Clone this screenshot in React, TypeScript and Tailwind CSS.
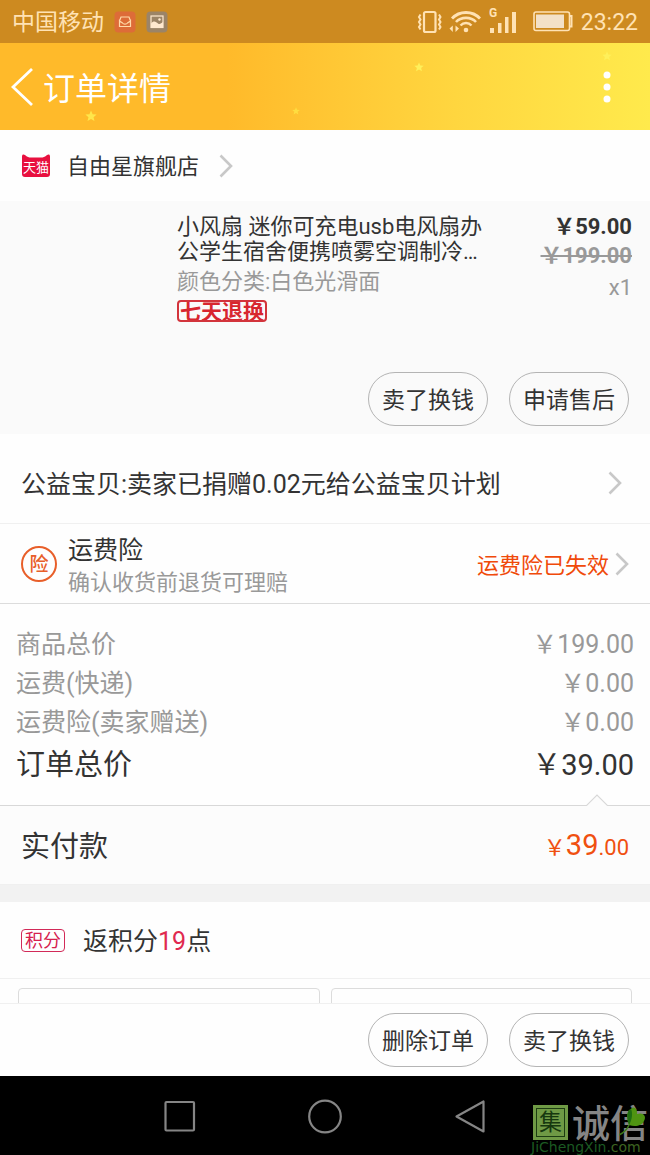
import React from "react";

const Chevron: React.FC<{ className?: string }> = ({ className = "" }) => (
  <svg
    className={`h-6 w-3.5 shrink-0 text-[#c8c8c8] ${className}`}
    viewBox="0 0 14 24"
    fill="none"
    stroke="currentColor"
    strokeWidth="2.6"
    aria-hidden="true"
  >
    <path d="M1.5 1.5 L12 12 L1.5 22.5" />
  </svg>
);

const Star: React.FC<{ className: string }> = ({ className }) => (
  <svg className={`absolute ${className}`} viewBox="0 0 24 24" fill="currentColor" aria-hidden="true">
    <path d="M12 1l3.2 7.4 8 .7-6.1 5.3 1.9 7.8-7-4.2-7 4.2 1.9-7.8L.8 9.1l8-.7z" />
  </svg>
);

const PillButton: React.FC<{ children: React.ReactNode }> = ({ children }) => (
  <button
    type="button"
    className="h-[54px] w-[120px] rounded-full border border-[#b4b4b4] pt-1 text-[23px] leading-8 text-[#333]"
  >
    {children}
  </button>
);

const StatusBar: React.FC = () => (
  <div className="flex h-[43px] shrink-0 items-center bg-[#cd8a20] px-3 text-[23px] leading-8 text-[#ffe2b4]">
    <span className="pt-0.5">中国移动</span>
    <svg className="ml-2.5 h-[22px] w-[22px]" viewBox="0 0 22 22" fill="none" aria-hidden="true">
      <rect x="0.5" y="0.5" width="21" height="21" rx="4" fill="#dd6c38" />
      <path
        d="M5.5 10 L7 6 H15 L16.5 10 M5.5 8.5 V15.5 H16.5 V8.5 M5.5 10 L8.5 12 C9.5 13.5 12.5 13.5 13.5 12 L16.5 10"
        stroke="#ffd9a8"
        strokeWidth="1.2"
      />
    </svg>
    <svg className="ml-2.5 h-[22px] w-[22px]" viewBox="0 0 22 22" fill="none" aria-hidden="true">
      <rect x="0.5" y="0.5" width="21" height="21" rx="4" fill="#9b8467" />
      <rect x="5" y="5" width="12" height="11.5" stroke="#ffe9cf" strokeWidth="1.2" />
      <path d="M5 12.5 C8 9 10 11 12 12.5 C14 14 15 12 17 11 V16.5 H5z" fill="#ffe9cf" />
      <circle cx="13.5" cy="8.5" r="1.2" fill="#ffe9cf" />
    </svg>

    <div className="ml-auto flex items-center">
      {/* vibrate */}
      <svg className="h-6 w-[26px]" viewBox="0 0 26 24" fill="none" stroke="currentColor" aria-hidden="true">
        <rect x="7" y="2" width="11.5" height="20" rx="1.5" strokeWidth="2.2" />
        <path
          d="M3.5 4.500 L2 7 L3.500 9.500 L2 12 L3.500 14.500 L2 17 L3.500 19.500 M22 4.500 L23.500 7 L22 9.500 L23.500 12 L22 14.500 L23.500 17 L22 19.500"
          strokeWidth="2"
        />
      </svg>
      {/* wifi */}
      <svg className="ml-1.5 h-6 w-8" viewBox="0 0 32 24" fill="none" stroke="currentColor" aria-hidden="true">
        <path d="M3 8.5 C10.5 0.5 23.5 0.5 31 8.5" strokeWidth="2.8" />
        <path d="M7 12 C12 6.5 22 6.5 27 12" strokeWidth="2.6" />
        <path d="M11.5 15.5 C14.5 12.2 19.5 12.2 22.5 15.5" strokeWidth="2.4" />
        <circle cx="17" cy="20" r="2.3" fill="currentColor" stroke="none" />
        <path d="M3.8 15.5 V22 L0.5 18.5z M6.500 22 V15.5 L10 18.5z" fill="currentColor" stroke="none" />
      </svg>
      {/* mobile signal */}
      <svg className="ml-2 h-8 w-7" viewBox="0 0 28 32" fill="currentColor" aria-hidden="true">
        <text x="0" y="11" fontSize="12" fontWeight="700" fontFamily="Roboto, sans-serif">
          G
        </text>
        <rect x="1" y="22" width="4" height="5" />
        <rect x="9" y="17" width="3.5" height="10" />
        <rect x="16" y="11" width="3.5" height="16" />
        <rect x="23" y="6" width="4" height="21" />
      </svg>
      {/* battery */}
      <svg className="ml-4 h-[21px] w-10" viewBox="0 0 40 21" fill="none" aria-hidden="true">
        <rect x="1" y="1" width="35.5" height="18.5" rx="2" stroke="currentColor" strokeWidth="1.6" />
        <rect x="3" y="3.5" width="28" height="13.5" fill="#f3e1c8" />
        <path d="M37 5 H38.5 V15.500 H37" stroke="currentColor" strokeWidth="2" />
      </svg>
      <time className="ml-2 pt-0.5">23:22</time>
    </div>
  </div>
);

const Header: React.FC = () => (
  <header className="relative flex h-[87px] shrink-0 items-center bg-linear-to-r from-[#ffba2a] from-35% via-[#ffd63f] via-70% to-[#ffea4c] text-white">
    <Star className="left-[85px] top-[67px] h-3 w-3 text-[#ffe64a]" />
    <Star className="left-[292px] top-16 h-2 w-2 text-[#ffdd40]" />
    <Star className="left-[414px] top-[19px] h-2.5 w-2.5 text-[#fff05a]" />
    <Star className="left-[602px] top-2 h-2.5 w-2.5 text-[#fff05a]" />
    <button type="button" aria-label="返回" className="pl-[11px]">
      <svg className="h-10 w-[23px]" viewBox="0 0 23 40" fill="none" stroke="currentColor" strokeWidth="2.8">
        <path d="M21 2 L2 20 L21 38" />
      </svg>
    </button>
    <h1 className="ml-[9px] pt-1 text-[32px] leading-10">订单详情</h1>
    <button type="button" aria-label="更多" className="ml-auto mr-[39px]">
      <svg className="h-8 w-2" viewBox="0 0 8 32" fill="currentColor">
        <circle cx="4" cy="4" r="3.5" />
        <circle cx="4" cy="16" r="3.5" />
        <circle cx="4" cy="28" r="3.5" />
      </svg>
    </button>
  </header>
);

const fees = [
  { label: "商品总价", value: "￥199.00" },
  { label: "运费(快递)", value: "￥0.00" },
  { label: "运费险(卖家赠送)", value: "￥0.00" },
];

const App: React.FC = () => {
  return (
    <div className="flex h-screen flex-col overflow-hidden bg-[#fefefe] font-['Roboto','Noto_Sans_CJK_SC',sans-serif] text-[#333]">
      <StatusBar />
      <Header />

      <main className="min-h-0 flex-1 overflow-y-auto [scrollbar-width:none]">
        <a href="#shop" className="flex h-[71px] items-center px-[21px] text-[22px] leading-8">
          <svg className="mr-4 h-6 w-[30px]" viewBox="0 0 30 24" aria-hidden="true">
            <path
              d="M1 2.5 C1 0.3 2.500 0 4 1 C6 3 8 3.600 10 3.600 H20 C22 3.600 24 3 26 1 C27.500 0 29 0.300 29 2.500 V20 C29 22 28 23 26 23 H4 C2 23 1 22 1 20z"
              fill="#e8103f"
            />
            <text x="15" y="18" fontSize="13" textAnchor="middle" fill="#fff">
              天猫
            </text>
          </svg>
          <span className="pt-0.5">自由星旗舰店</span>
          <Chevron className="ml-5" />
        </a>

        <section className="bg-[#fafafa] pb-2 pt-[13px]">
          <div className="flex pl-[21px] pr-[18px]">
            <div className="mr-3 h-36 w-36 shrink-0" />
            <div className="min-w-0 flex-1">
              <h2 className="text-[22px] leading-[25px]">
                小风扇 迷你可充电usb电风扇办公学生宿舍便携喷雾空调制冷…
              </h2>
              <p className="mt-1 text-[22px] leading-7 text-[#999]">颜色分类:白色光滑面</p>
              <span className="mt-1 flex h-[22px] w-[90px] items-center justify-center overflow-hidden rounded border-2 border-[#d3343c] pt-0.5 text-[21px] font-bold leading-none text-[#d8262f]">
                七天退换
              </span>
            </div>
            <div className="w-[140px] shrink-0 text-right text-[22px]">
              <p className="font-bold leading-[26px]">￥59.00</p>
              <p className="leading-8 text-[#999]">
                <del className="font-bold">￥199.00</del>
              </p>
              <p className="leading-8 text-[#999]">x1</p>
            </div>
          </div>
          <div className="mt-3.5 flex justify-end gap-[21px] px-[21px]">
            <PillButton>卖了换钱</PillButton>
            <PillButton>申请售后</PillButton>
          </div>
        </section>

        <a
          href="#charity"
          className="flex h-[90px] items-center justify-between border-b border-[#f0f0f0] pl-[21px] pr-7 pt-2 text-[25px] leading-9"
        >
          <span className="pt-1">公益宝贝:卖家已捐赠0.02元给公益宝贝计划</span>
          <Chevron />
        </a>

        <a href="#insurance" className="flex h-20 items-center border-b border-[#dcdcdc] px-[21px]">
          <span className="flex h-9 w-9 shrink-0 items-center justify-center rounded-full border-2 border-[#e85f2a] pt-0.5 text-[19px] font-medium leading-none text-[#e85f2a]">
            险
          </span>
          <div className="ml-[11px] mt-[7px]">
            <h3 className="text-[25px] leading-8">运费险</h3>
            <p className="text-[22px] leading-8 text-[#999]">确认收货前退货可理赔</p>
          </div>
          <span className="ml-auto pt-1 text-[22px] leading-8 text-[#f04a0a]">运费险已失效</span>
          <Chevron className="ml-1.5" />
        </a>

        <dl className="border-b border-[#d8d8d8] px-4 pb-[17px] pt-[21px]">
          {fees.map((fee) => (
            <div key={fee.label} className="flex justify-between text-[25px] leading-[39px] text-[#999]">
              <dt>{fee.label}</dt>
              <dd>{fee.value}</dd>
            </div>
          ))}
          <div className="flex justify-between text-[29px] leading-[46px]">
            <dt>订单总价</dt>
            <dd>￥39.00</dd>
          </div>
        </dl>

        <section className="relative flex h-[79px] items-center justify-between border-b border-[#f0f0f0] bg-[#fcfcfc] px-[21px]">
          <svg className="absolute -top-3 right-[42px] h-3 w-[22px]" viewBox="0 0 22 12" aria-hidden="true">
            <path d="M0 12 L11 1 L22 12" fill="#fcfcfc" stroke="#d8d8d8" strokeWidth="1.2" />
          </svg>
          <span className="pt-1 text-[29px] leading-10">实付款</span>
          <span className="pt-0.5 text-[22px] leading-10 text-[#f05010]">
            ￥<span className="text-[29px]">39</span>.00
          </span>
        </section>

        <div className="h-[17px] bg-[#f2f2f2]" />

        <section className="flex h-[77px] items-center border-b border-[#f0f0f0] px-[21px]">
          <span className="flex h-[23px] w-11 items-center justify-center rounded border border-[#d22a58] pt-0.5 text-[18px] leading-none text-[#d6204e]">
            积分
          </span>
          <p className="ml-[18px] pt-1 text-[25px] leading-9">
            返积分<span className="text-[#e0294f]">19</span>点
          </p>
        </section>

        <div className="grid grid-cols-2 gap-[11px] px-[18px] pt-[9px]">
          <div className="h-20 rounded border border-[#dcdcdc]" />
          <div className="h-20 rounded border border-[#dcdcdc]" />
        </div>
      </main>

      <footer className="flex shrink-0 justify-end gap-[21px] border-t border-[#f0f0f0] px-[21px] py-[9px]">
        <PillButton>删除订单</PillButton>
        <PillButton>卖了换钱</PillButton>
      </footer>

      <nav className="relative grid h-[79px] shrink-0 grid-cols-3 items-center justify-items-center overflow-hidden bg-black px-[108px] text-[#858585]">
        <button type="button" aria-label="最近任务">
          <svg className="h-9 w-9" viewBox="0 0 36 36" fill="none" stroke="currentColor" strokeWidth="2.2">
            <rect x="3.5" y="4" width="28.5" height="28.5" rx="1" />
          </svg>
        </button>
        <button type="button" aria-label="主屏幕">
          <svg className="h-9 w-9" viewBox="0 0 36 36" fill="none" stroke="currentColor" strokeWidth="2.2">
            <circle cx="18" cy="18.5" r="15.8" />
          </svg>
        </button>
        <button type="button" aria-label="返回上一页">
          <svg className="h-9 w-9" viewBox="0 0 36 36" fill="none" stroke="currentColor" strokeWidth="2.2" strokeLinejoin="round">
            <path d="M31.5 3.5 V33.5 L4.5 18.5z" />
          </svg>
        </button>

        {/* site watermark */}
        <div className="absolute bottom-0 left-[calc(100%-119px)] whitespace-nowrap">
          <div className="flex items-end">
            <span className="ml-0.5 flex h-[35px] w-[35px] items-center justify-center bg-[#6f9a45] p-[3px]">
              <span className="flex h-full w-full items-center justify-center border border-[#1d3d12] text-[23px] leading-none text-[#16380f]">
                集
              </span>
            </span>
            <span className="ml-1 text-[38px] font-medium leading-[32px] text-[#858585]">诚信</span>
          </div>
          <p className="font-['DejaVu_Sans',sans-serif] text-[14px] leading-[15px] text-[#1c5a22]">
            JiChengXin.<span className="text-[#3d6420]">com</span>
          </p>
          <svg className="absolute left-[88px] top-0 h-8 w-8" viewBox="0 0 32 32" aria-hidden="true">
            <path d="M10 20 C7 12 8 5 12 4 C15 0 19 5 18 9 C24 7 28 11 25 16 C23 21 16 22 10 20z" fill="#4f9412" />
            <path d="M10 20 C7 12 8 5 12 4 C14 8 13 15 10 20z" fill="#1f6d12" />
            <path d="M10 20 C8 25 4 28 0 30" fill="none" stroke="#3d7a18" strokeWidth="1.5" />
          </svg>
        </div>
      </nav>
    </div>
  );
};

export default App;
